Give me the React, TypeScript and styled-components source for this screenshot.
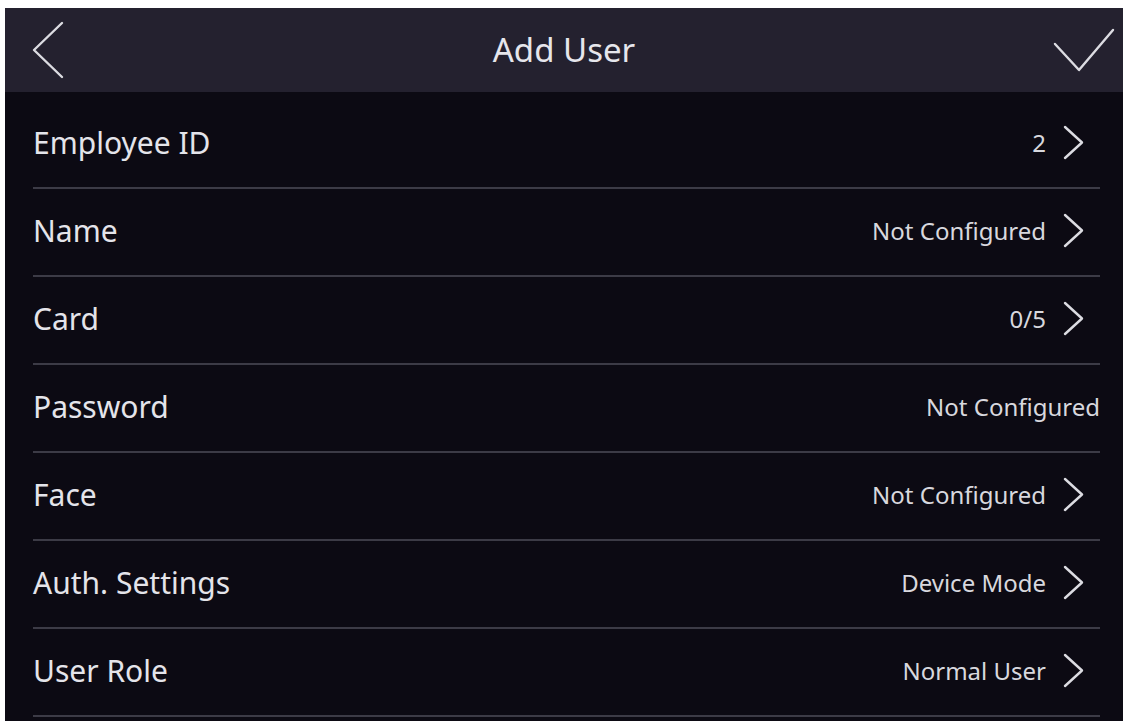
import styled, { createGlobalStyle } from "styled-components";

const GlobalStyle = createGlobalStyle`
  html, body {
    margin: 0;
    padding: 0;
    background: #ffffff;
  }
  body {
    font-family: "Noto Sans", "Open Sans", sans-serif;
  }
`;

// White frame around the device screen, as in the photo of the panel.
const Frame = styled.div`
  width: 1126px;
  height: 723px;
  padding: 8px 3px 2px 5px;
  box-sizing: border-box;
  background: #ffffff;
`;

const Screen = styled.div`
  height: 100%;
  display: flex;
  flex-direction: column;
  background: #0c0a13;
  overflow: hidden;
`;

/* Header */
const Header = styled.div`
  height: 84px;
  flex-shrink: 0;
  display: grid;
  grid-template-columns: 1fr auto 1fr;
  align-items: center;
  padding: 0 8px;
  background: #24212f;
  color: #e6e6ec;
`;

const HeaderSide = styled.div<{ $alignment: "start" | "end" }>`
  display: flex;
  align-items: center;
  justify-content: ${(props) => props.$alignment};
`;

const Title = styled.h1`
  margin: 0 0 2px;
  font-size: 33px;
  font-weight: 400;
  line-height: 1;
  white-space: nowrap;
`;

const IconButton = styled.button<{ $inset?: number }>`
  display: flex;
  padding: 0;
  margin-left: ${(props) => props.$inset ?? 0}px;
  border: none;
  background: none;
  color: #dcdce2;
  cursor: pointer;
`;

const BackIcon = () => (
  <svg width="34" height="58" viewBox="0 0 34 58" fill="none">
    <polyline
      points="31,2 3,29 31,56"
      stroke="currentColor"
      strokeWidth="2.4"
      strokeLinecap="round"
      strokeLinejoin="round"
    />
  </svg>
);

const CheckIcon = () => (
  <svg width="62" height="44" viewBox="0 0 62 44" fill="none">
    <polyline
      points="2,16 26,42 60,2"
      stroke="currentColor"
      strokeWidth="2.4"
      strokeLinecap="round"
      strokeLinejoin="round"
    />
  </svg>
);

/* List */
const List = styled.div`
  display: flex;
  flex-direction: column;
  padding: 9px 23px 0 28px;
`;

const Row = styled.div`
  height: 83px;
  flex-shrink: 0;
  display: flex;
  align-items: center;
  justify-content: space-between;
  padding-bottom: 3px;
  border-bottom: 2px solid #3c3b46;
`;

const Label = styled.span`
  font-size: 30px;
  color: #e4e4ea;
  white-space: nowrap;
`;

const ValueGroup = styled.div`
  display: flex;
  align-items: center;
  gap: 17px;
`;

const Value = styled.span`
  font-size: 24px;
  color: #d8d8de;
  white-space: nowrap;
`;

const ChevronWrap = styled.span`
  display: flex;
  margin-right: 16px;
  color: #dcdce2;
`;

const Chevron = () => (
  <ChevronWrap>
    <svg width="21" height="35" viewBox="0 0 21 35" fill="none">
      <polyline
        points="2,2 19,17.5 2,33"
        stroke="currentColor"
        strokeWidth="2.4"
        strokeLinecap="round"
        strokeLinejoin="round"
      />
    </svg>
  </ChevronWrap>
);

interface Field {
  label: string;
  value: string;
  link: boolean;
}

const fields: Field[] = [
  { label: "Employee ID", value: "2", link: true },
  { label: "Name", value: "Not Configured", link: true },
  { label: "Card", value: "0/5", link: true },
  { label: "Password", value: "Not Configured", link: false },
  { label: "Face", value: "Not Configured", link: true },
  { label: "Auth. Settings", value: "Device Mode", link: true },
  { label: "User Role", value: "Normal User", link: true },
];

const App = () => (
  <>
    <GlobalStyle />
    <Frame>
      <Screen>
        <Header>
          <HeaderSide $alignment="start">
            <IconButton aria-label="Back" $inset={18}>
              <BackIcon />
            </IconButton>
          </HeaderSide>
          <Title>Add User</Title>
          <HeaderSide $alignment="end">
            <IconButton aria-label="Save">
              <CheckIcon />
            </IconButton>
          </HeaderSide>
        </Header>
        <List>
          {fields.map((f) => (
            <Row key={f.label}>
              <Label>{f.label}</Label>
              <ValueGroup>
                <Value>{f.value}</Value>
                {f.link && <Chevron />}
              </ValueGroup>
            </Row>
          ))}
        </List>
      </Screen>
    </Frame>
  </>
);

export default App;
